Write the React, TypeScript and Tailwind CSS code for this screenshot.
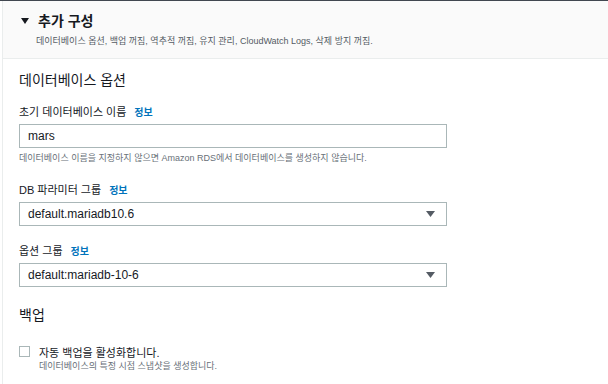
const font = { fontFamily: '"Liberation Sans", "Noto Sans CJK KR", sans-serif' };

const InfoLink = () => (
  <span className="ml-[8px] text-[10px] font-bold text-[#0073bb]">정보</span>
);

const Caret = () => (
  <svg width="9" height="6" viewBox="0 0 9 6" className="mr-[3px] shrink-0">
    <path d="M0 0 H9 L4.5 6 Z" fill="#545b64" />
  </svg>
);

const Field = ({ label, children }: { label: string; children: React.ReactNode }) => (
  <div className="flex flex-col">
    <div className="flex h-[16px] items-center text-[11px] text-[#16191f]">
      {label}
      <InfoLink />
    </div>
    <div className="mt-[4px]">{children}</div>
  </div>
);

const Select = ({ value }: { value: string }) => (
  <div className="flex h-[24px] w-[428px] items-center justify-between border border-[#aab7b8] bg-white pl-[8px] pr-[8px] text-[12px] text-[#16191f]">
    <span>{value}</span>
    <Caret />
  </div>
);

export default function App() {
  return (
    <div className="h-[384px] w-[608px] overflow-hidden bg-white" style={font}>
      <div className="h-[1px] w-full bg-[#414750]" />
      <div className="ml-[2px] h-full border-l border-[#eaeded]">
        {/* header */}
        <div className="flex h-[58px] flex-col border-b border-[#eaeded] bg-[#fafafa] pl-[17px] pt-[9px]">
          <div className="flex h-[22px] items-center">
            <svg width="8" height="6" viewBox="0 0 8 6" className="ml-[1px] mr-[9px]">
              <path d="M0 0 H8 L4 6 Z" fill="#16191f" />
            </svg>
            <span className="text-[14px] font-bold text-[#16191f]">추가 구성</span>
          </div>
          <div className="ml-[16px] mt-[2px] text-[9px] leading-[14px] text-[#545b64]">
            데이터베이스 옵션, 백업 꺼짐, 역추적 꺼짐, 유지 관리, CloudWatch Logs, 삭제 방지 꺼짐.
          </div>
        </div>

        {/* body */}
        <div className="flex flex-col pl-[16px] pt-[11px]">
          <div className="h-[20px] text-[14px] leading-[20px] text-[#16191f]">데이터베이스 옵션</div>

          <div className="mt-[14px]">
            <Field label="초기 데이터베이스 이름">
              <div className="flex h-[24px] w-[428px] items-center border border-[#aab7b8] bg-white pl-[8px] text-[12px] text-[#16191f]">
                mars
              </div>
            </Field>
          </div>
          <div className="mt-[3px] text-[9px] leading-[14px] text-[#687078]">
            데이터베이스 이름을 지정하지 않으면 Amazon RDS에서 데이터베이스를 생성하지 않습니다.
          </div>

          <div className="mt-[17px]">
            <Field label="DB 파라미터 그룹">
              <Select value="default.mariadb10.6" />
            </Field>
          </div>

          <div className="mt-[17px]">
            <Field label="옵션 그룹">
              <Select value="default:mariadb-10-6" />
            </Field>
          </div>

          <div className="mt-[18px] h-[20px] text-[14px] leading-[20px] text-[#16191f]">백업</div>

          <div className="mt-[21px] flex items-start gap-[9px]">
            <div className="h-[11px] w-[11px] border border-[#aab7b8] bg-white" />
            <div className="flex flex-col">
              <div className="text-[11px] leading-[14px] text-[#16191f]">자동 백업을 활성화합니다.</div>
              <div className="text-[9px] leading-[13px] text-[#687078]">데이터베이스의 특정 시점 스냅샷을 생성합니다.</div>
            </div>
          </div>
        </div>
      </div>
    </div>
  );
}
